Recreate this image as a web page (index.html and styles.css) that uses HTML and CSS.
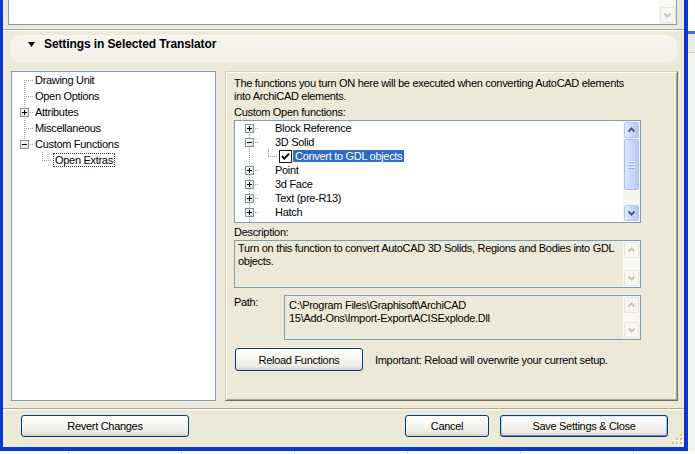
FILE: index.html
```html
<!DOCTYPE html>
<html>
<head>
<meta charset="utf-8">
<title>Settings in Selected Translator</title>
<link rel="stylesheet" href="styles.css">
</head>
<body>
<div class="window">
  <div class="topbox">
    <div class="topfill"></div>
    <div class="sb dis topsb">
      <div class="track"></div>
      <div class="sbb"><svg width="13" height="14" viewBox="0 0 13 14"><polyline points="3.5,5.5 6.5,8.5 9.5,5.5" /></svg></div>
    </div>
  </div>
  <div class="sep"></div>
  <div class="header">
    <svg class="tri" width="7" height="5" viewBox="0 0 7 5"><polygon points="0,0 7,0 3.5,5" fill="#000"/></svg>
    <span class="htitle">Settings in Selected Translator</span>
  </div>
  <div class="main">
    <div class="tree">
      <div class="row"><span class="g first"></span><span class="lbl">Drawing Unit</span></div>
      <div class="row"><span class="g mid"></span><span class="lbl">Open Options</span></div>
      <div class="row"><span class="g mid"><span class="box plus"></span></span><span class="lbl">Attributes</span></div>
      <div class="row"><span class="g mid"></span><span class="lbl">Miscellaneous</span></div>
      <div class="row"><span class="g last"><span class="box"></span></span><span class="lbl">Custom Functions</span></div>
      <div class="row"><span class="g child"></span><span class="lbl focus">Open Extras</span></div>
    </div>
    <div class="panel">
      <p class="intro">The functions you turn ON here will be executed when converting AutoCAD elements<br>into ArchiCAD elements.</p>
      <div class="label">Custom Open functions:</div>
      <div class="list">
        <div class="lrows">
          <div class="lrow"><span class="lg first"><span class="box plus"></span></span><span class="ll">Block Reference</span></div>
          <div class="lrow"><span class="lg mid"><span class="box"></span></span><span class="ll">3D Solid</span></div>
          <div class="lrow"><span class="lg lchild"></span><span class="check"><svg width="11" height="11" viewBox="0 0 11 11"><path d="M2 5.2 L4.3 7.6 L9 2.6" fill="none" stroke="#000" stroke-width="2"/></svg></span><span class="ll sel">Convert to GDL objects</span></div>
          <div class="lrow"><span class="lg mid"><span class="box plus"></span></span><span class="ll">Point</span></div>
          <div class="lrow"><span class="lg mid"><span class="box plus"></span></span><span class="ll">3d Face</span></div>
          <div class="lrow"><span class="lg mid"><span class="box plus"></span></span><span class="ll">Text (pre-R13)</span></div>
          <div class="lrow"><span class="lg mid"><span class="box plus"></span></span><span class="ll">Hatch</span></div>
          <div class="lrow"><span class="lg vonly"></span></div>
        </div>
        <div class="sb">
          <div class="sbb"><svg width="13" height="14" viewBox="0 0 13 14"><polyline points="3.5,8.5 6.5,5.5 9.5,8.5" /></svg></div>
          <div class="thumb"><svg width="7" height="8" viewBox="0 0 7 8"><rect x="0" y="0" width="7" height="1" fill="#eef4fe"/><rect x="0" y="1" width="7" height="1" fill="#8cb0f0"/><rect x="0" y="3" width="7" height="1" fill="#eef4fe"/><rect x="0" y="4" width="7" height="1" fill="#8cb0f0"/><rect x="0" y="6" width="7" height="1" fill="#eef4fe"/><rect x="0" y="7" width="7" height="1" fill="#8cb0f0"/></svg></div>
          <div class="track"></div>
          <div class="sbb"><svg width="13" height="14" viewBox="0 0 13 14"><polyline points="3.5,5.5 6.5,8.5 9.5,5.5" /></svg></div>
        </div>
      </div>
      <div class="label desc-label">Description:</div>
      <div class="field desc">
        <div class="ftext">Turn on this function to convert AutoCAD 3D Solids, Regions and Bodies into GDL<br>objects.</div>
        <div class="sb dis">
          <div class="sbb"><svg width="13" height="14" viewBox="0 0 13 14"><polyline points="3.5,8.5 6.5,5.5 9.5,8.5" /></svg></div>
          <div class="track"></div>
          <div class="sbb"><svg width="13" height="14" viewBox="0 0 13 14"><polyline points="3.5,5.5 6.5,8.5 9.5,5.5" /></svg></div>
        </div>
      </div>
      <div class="pathrow">
        <div class="plabel">Path:</div>
        <div class="field path">
          <div class="ftext">C:\Program Files\Graphisoft\ArchiCAD<br>15\Add-Ons\Import-Export\ACISExplode.Dll</div>
          <div class="sb dis">
            <div class="sbb"><svg width="13" height="14" viewBox="0 0 13 14"><polyline points="3.5,8.5 6.5,5.5 9.5,8.5" /></svg></div>
            <div class="track"></div>
            <div class="sbb"><svg width="13" height="14" viewBox="0 0 13 14"><polyline points="3.5,5.5 6.5,8.5 9.5,5.5" /></svg></div>
          </div>
        </div>
      </div>
      <div class="reloadrow">
        <button class="btn reload">Reload Functions</button>
        <span class="note">Important: Reload will overwrite your current setup.</span>
      </div>
    </div>
  </div>
  <div class="sep sep-bottom"></div>
  <div class="footer">
    <button class="btn revert">Revert Changes</button>
    <button class="btn cancel">Cancel</button>
    <button class="btn save">Save Settings &amp; Close</button>
    <svg class="grip" width="11" height="11" viewBox="0 0 11 11">
      <rect x="9" y="1" width="2" height="2" fill="#fff"/><rect x="8" y="0" width="2" height="2" fill="#c2bfb1"/>
      <rect x="5" y="5" width="2" height="2" fill="#fff"/><rect x="4" y="4" width="2" height="2" fill="#c2bfb1"/>
      <rect x="9" y="5" width="2" height="2" fill="#fff"/><rect x="8" y="4" width="2" height="2" fill="#c2bfb1"/>
      <rect x="1" y="9" width="2" height="2" fill="#fff"/><rect x="0" y="8" width="2" height="2" fill="#c2bfb1"/>
      <rect x="5" y="9" width="2" height="2" fill="#fff"/><rect x="4" y="8" width="2" height="2" fill="#c2bfb1"/>
      <rect x="9" y="9" width="2" height="2" fill="#fff"/><rect x="8" y="8" width="2" height="2" fill="#c2bfb1"/>
    </svg>
  </div>
</div>
</body>
</html>
```

FILE: styles.css
```css
* { box-sizing: border-box; }

html, body { margin: 0; padding: 0; }

body {
  width: 695px;
  height: 454px;
  overflow: hidden;
  font-family: "Liberation Sans", Arial, sans-serif;
  font-size: 11px;
  letter-spacing: -0.3px;
  color: #000;
  background:
    repeating-linear-gradient(to right, transparent 0 68px, #dcdad2 68px 69px, transparent 69px 113px) 0 451px / 100% 3px no-repeat,
    linear-gradient(to bottom, #ffffff 0 31px, #4c6cd2 31px 34px, #eceae2 34px 52px, #cfcdc2 52px 53px, #f4f3ee 53px 451px, #fbfbf9 451px);
}

.window {
  width: 688px;
  height: 451px;
  border-left: 3px solid #0b36d6;
  border-right: 4px solid #0b36d6;
  border-bottom: 4px solid #0b36d6;
  background: #ece9d8;
  display: flex;
  flex-direction: column;
  box-shadow: inset 1px 0 0 #f4f2e8;
}

/* top text area */
.topbox {
  margin-left: 5px;
  width: 669px;
  height: 25px;
  flex: none;
  border: 1px solid #7f9db9;
  border-top: none;
  background: #fff;
  display: flex;
}
.topfill { flex: 1; }

/* separators */
.sep {
  flex: none;
  height: 2px;
  margin-top: 4px;
  border-top: 1px solid #aca899;
  border-bottom: 1px solid #fff;
}
.sep-bottom { margin-top: 7px; }

/* header */
.header {
  flex: none;
  margin: 4px 0 0 7px;
  width: 667px;
  height: 28px;
  border-radius: 11px;
  background: linear-gradient(to bottom, #f6f5f0, #f1efe6);
  display: flex;
  align-items: flex-start;
  padding: 3px 0 0 18px;
}
.tri { margin-top: 4px; flex: none; }
.htitle {
  margin-left: 9px;
  font-weight: bold;
  font-size: 12px;
  line-height: 13px;
  letter-spacing: -0.1px;
}

/* main area */
.main {
  flex: none;
  height: 330px;
  margin-top: 8px;
  display: flex;
}

.tree {
  margin-left: 8px;
  width: 205px;
  height: 330px;
  border: 1px solid #7f9db9;
  background: #fff;
}

.row {
  display: flex;
  height: 16px;
  align-items: center;
}

.g {
  flex: none;
  width: 22px;
  height: 16px;
  display: flex;
  align-items: flex-start;
  background-repeat: no-repeat;
}
.g.first {
  background-image: repeating-linear-gradient(to bottom, #a0a0a0 0 1px, transparent 1px 2px), repeating-linear-gradient(to right, #a0a0a0 0 1px, transparent 1px 2px);
  background-size: 1px 8px, 10px 1px;
  background-position: 12px 8px, 12px 8px;
}
.g.mid {
  background-image: repeating-linear-gradient(to bottom, #a0a0a0 0 1px, transparent 1px 2px), repeating-linear-gradient(to right, #a0a0a0 0 1px, transparent 1px 2px);
  background-size: 1px 16px, 10px 1px;
  background-position: 12px 0, 12px 8px;
}
.g.last {
  background-image: repeating-linear-gradient(to bottom, #a0a0a0 0 1px, transparent 1px 2px), repeating-linear-gradient(to right, #a0a0a0 0 1px, transparent 1px 2px);
  background-size: 1px 8px, 10px 1px;
  background-position: 12px 0, 12px 8px;
}
.g.child {
  width: 41px;
  background-image: repeating-linear-gradient(to bottom, #a0a0a0 0 1px, transparent 1px 2px), repeating-linear-gradient(to right, #a0a0a0 0 1px, transparent 1px 2px);
  background-size: 1px 8px, 10px 1px;
  background-position: 30px 0, 30px 8px;
}
.g .box { margin: 4px 0 0 8px; }

.box {
  flex: none;
  width: 9px;
  height: 9px;
  border: 1px solid #7a94a6;
  background:
    linear-gradient(#000, #000) 1px 3px / 5px 1px no-repeat,
    linear-gradient(to bottom right, #ffffff, #e2ded2);
}
.box.plus {
  background:
    linear-gradient(#000, #000) 1px 3px / 5px 1px no-repeat,
    linear-gradient(#000, #000) 3px 1px / 1px 5px no-repeat,
    linear-gradient(to bottom right, #ffffff, #e2ded2);
}

.lbl {
  padding: 0 1px;
  line-height: 16px;
  white-space: nowrap;
}
.lbl.focus {
  line-height: 12px;
  border: 1px dotted #2b2b40;
  padding: 0 1px;
  margin-left: 0;
}

/* right panel */
.panel {
  margin-left: 9px;
  width: 453px;
  height: 330px;
  border-top: 1px solid #d0cdbe;
  border-left: 1px solid #d0cdbe;
  border-right: 1px solid #716f64;
  border-bottom: 1px solid #716f64;
  box-shadow: inset 1px 1px 0 #fff, inset -1px -1px 0 #aca899;
  padding: 5px 0 0 8px;
  display: flex;
  flex-direction: column;
}

.intro {
  margin: 0;
  line-height: 13px;
  white-space: nowrap;
}
.label {
  margin-top: 3px;
  line-height: 13px;
}

.list {
  margin-top: 1px;
  width: 407px;
  height: 103px;
  flex: none;
  border: 1px solid #7f9db9;
  background: #fff;
  display: flex;
}
.lrows {
  flex: 1;
  overflow: hidden;
}
.lrow {
  display: flex;
  height: 14px;
  align-items: flex-start;
}
.lg {
  flex: none;
  width: 40px;
  height: 14px;
  display: flex;
  align-items: flex-start;
  background-repeat: no-repeat;
}
.lg .box { margin: 3px 0 0 10px; }
.lg.first {
  background-image: repeating-linear-gradient(to bottom, #a0a0a0 0 1px, transparent 1px 2px), repeating-linear-gradient(to right, #a0a0a0 0 1px, transparent 1px 2px);
  background-size: 1px 7px, 10px 1px;
  background-position: 14px 7px, 14px 7px;
}
.lg.mid {
  background-image: repeating-linear-gradient(to bottom, #a0a0a0 0 1px, transparent 1px 2px), repeating-linear-gradient(to right, #a0a0a0 0 1px, transparent 1px 2px);
  background-size: 1px 14px, 10px 1px;
  background-position: 14px 0, 14px 7px;
}
.lg.vonly {
  background-image: repeating-linear-gradient(to bottom, #a0a0a0 0 1px, transparent 1px 2px);
  background-size: 1px 14px;
  background-position: 14px 0;
}
.lg.lchild {
  width: 44px;
  background-image: repeating-linear-gradient(to bottom, #a0a0a0 0 1px, transparent 1px 2px), repeating-linear-gradient(to bottom, #a0a0a0 0 1px, transparent 1px 2px), repeating-linear-gradient(to right, #a0a0a0 0 1px, transparent 1px 2px);
  background-size: 1px 14px, 1px 7px, 10px 1px;
  background-position: 14px 0, 33px 0, 33px 7px;
}
.check {
  flex: none;
  width: 13px;
  height: 13px;
  margin-top: 1px;
  border: 1px solid #1a1a1a;
  background: #fff;
  display: flex;
}
.ll {
  line-height: 14px;
  white-space: nowrap;
}
.ll.sel {
  margin: 1px 0 0 1px;
  padding: 0 2px;
  line-height: 12px;
  height: 12px;
  background: #316ac5;
  color: #fff;
}

/* scrollbars */
.sb {
  flex: none;
  width: 17px;
  padding: 1px;
  display: flex;
  flex-direction: column;
  background: #f6f5f0;
}
.sbb {
  flex: none;
  height: 16px;
  border: 1px solid #b3c7f5;
  border-radius: 2px;
  background: linear-gradient(to right, #e3ebfe, #c3d4fb 60%, #b4c8f6);
  display: flex;
  align-items: center;
  justify-content: center;
}
.sbb svg polyline {
  fill: none;
  stroke: #4d6185;
  stroke-width: 2;
}
.thumb {
  flex: none;
  height: 51px;
  margin-top: 1px;
  border: 1px solid #a9bfef;
  border-radius: 2px;
  background: linear-gradient(to right, #dde7fd, #c6d6fb 60%, #b7caf5);
  display: flex;
  align-items: center;
  justify-content: center;
}
.track { flex: 1; }

.sb.dis { background: #f6f5f0; }
.sb.dis .sbb {
  border: 1px solid #e6e4da;
  background: #f7f6f2;
}
.sb.dis .sbb svg polyline { stroke: #c8c6b8; }
.sb.dis .track { background: #f8f7f3; }
.topsb { padding-bottom: 1px; }

/* readonly fields */
.desc-label { margin-top: 3px; }
.field {
  flex: none;
  border: 1px solid #7f9db9;
  background: #ece9d8;
  display: flex;
}
.field.desc {
  margin-top: 1px;
  width: 407px;
  height: 48px;
}
.field.path {
  width: 357px;
  height: 45px;
}
.ftext {
  flex: 1;
  line-height: 13px;
  white-space: nowrap;
  padding: 1px 0 0 3px;
}
.field.path .ftext { padding: 3px 0 0 4px; }

.pathrow {
  margin-top: 7px;
  display: flex;
}
.plabel {
  width: 50px;
  line-height: 13px;
  padding-top: 1px;
}

.reloadrow {
  margin-top: 8px;
  display: flex;
  align-items: center;
}
.note { margin-left: 12px; }

/* buttons */
.btn {
  font-family: inherit;
  font-size: 11px;
  letter-spacing: -0.3px;
  color: #000;
  height: 22px;
  padding: 0;
  border: 1px solid #003c74;
  border-radius: 3px;
  background: linear-gradient(to bottom, #ffffff 0%, #f7f6f2 45%, #ecebe5 80%, #d8d3c8 100%);
  flex: none;
}
.reload {
  width: 128px;
  height: 23px;
  margin-left: 1px;
}

.footer {
  flex: 1;
  display: flex;
  align-items: flex-start;
  padding: 5px 0 0 18px;
}
.revert { width: 168px; }
.cancel { width: 84px; margin-left: 216px; }
.save {
  width: 168px;
  margin-left: 11px;
  box-shadow: inset 0 1px 0 #cee7ff, inset 0 -1px 0 #6982ee, inset 1px 0 0 #b9d1fa, inset -1px 0 0 #9fb8f4;
}
.grip {
  flex: none;
  align-self: flex-end;
  margin: 0 0 2px 4px;
}
```
